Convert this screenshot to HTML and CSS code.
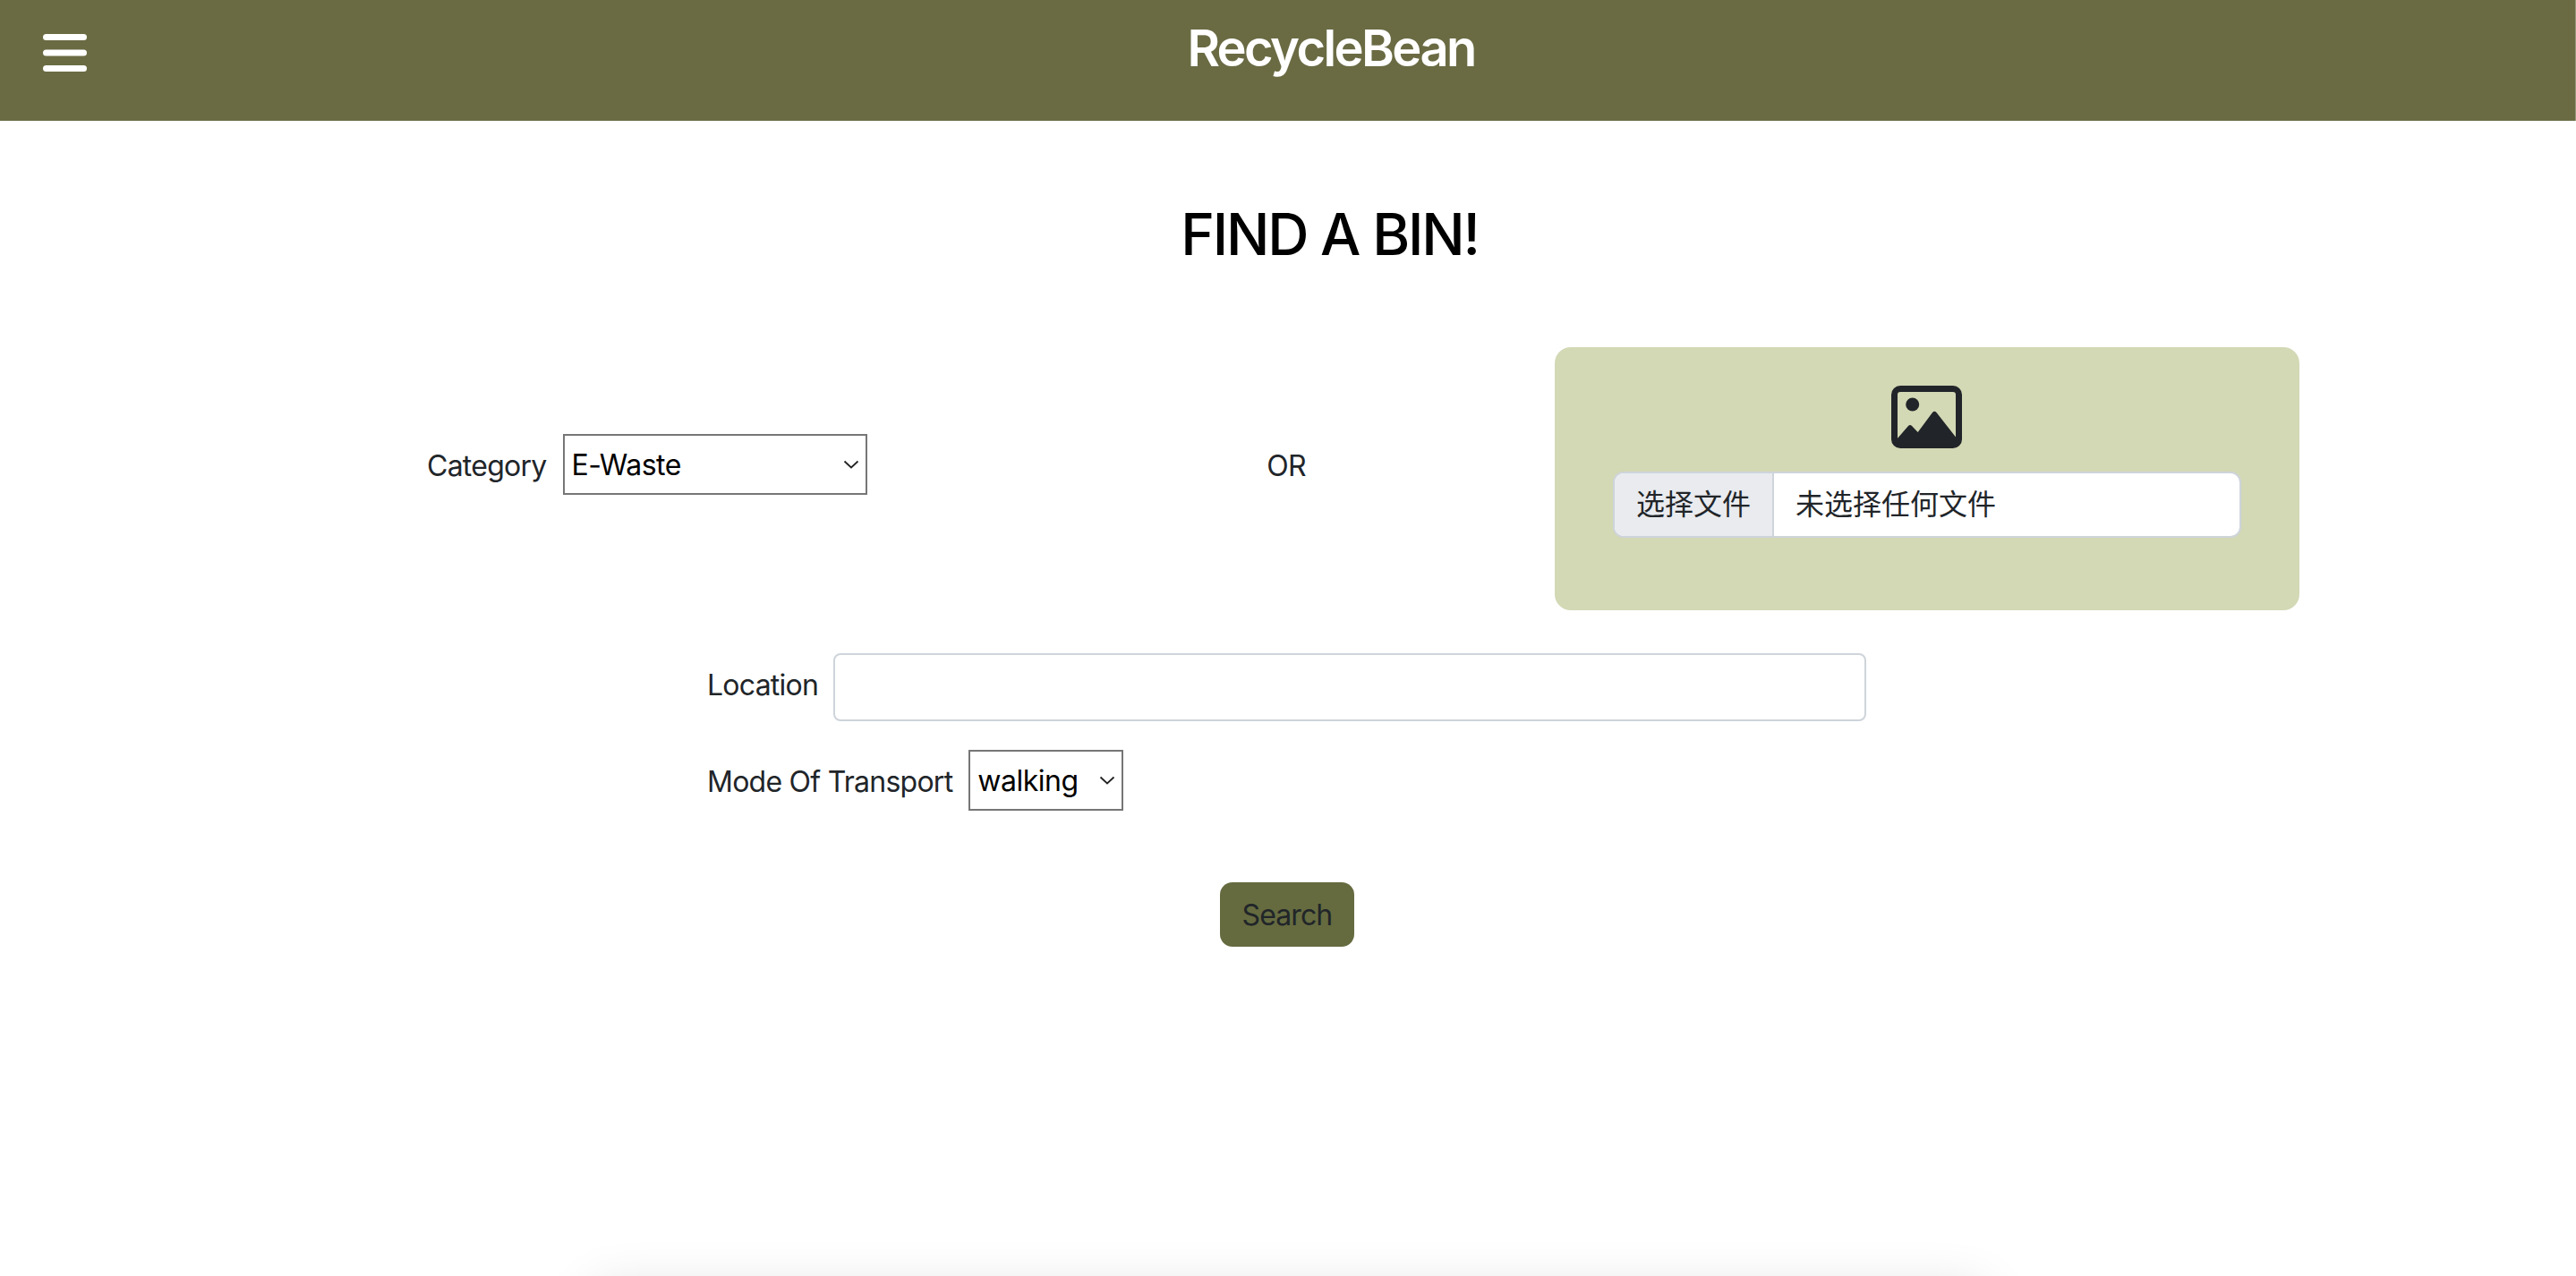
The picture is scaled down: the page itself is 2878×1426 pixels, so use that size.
FILE: index.html
```html
<!DOCTYPE html>
<html lang="en">
<head>
    <meta charset="UTF-8">
    <meta name="viewport" content="width=device-width, initial-scale=1.0">
    <title>RecycleBean</title>
    <link rel="stylesheet" href="styles.css">
</head>
<body>
    <header class="topbar">
        <svg class="menu-icon" width="49" height="42" viewBox="0 0 49 42" aria-hidden="true">
            <rect x="0" y="0" width="49" height="7" rx="3.5"/>
            <rect x="0" y="17.5" width="49" height="7" rx="3.5"/>
            <rect x="0" y="35" width="49" height="7" rx="3.5"/>
        </svg>
        <div class="brand">RecycleBean</div>
    </header>

    <main>
        <h1 class="page-title">FIND A BIN!</h1>

        <form class="find-form">
            <div class="find-row">
                <div class="category-col">
                    <label for="category">Category</label>
                    <select id="category" class="plain-select category-select">
                        <option>E-Waste</option>
                    </select>
                </div>
                <div class="or-col">OR</div>
                <div class="upload-panel">
                    <svg class="image-icon" width="80" height="70" viewBox="0 0 80 70" aria-hidden="true">
                        <path fill-rule="evenodd" d="M10 0H69A10 10 0 0 1 79 10V60A10 10 0 0 1 69 70H10A10 10 0 0 1 0 60V10A10 10 0 0 1 10 0ZM10 7A3 3 0 0 0 7 10V60A3 3 0 0 0 10 63H69A3 3 0 0 0 72 60V10A3 3 0 0 0 69 7Z"/>
                        <circle cx="23.7" cy="21" r="7.5"/>
                        <path d="M6 64V60L19 45Q21 43 23 45L29.700 52L46 30Q48.300 27.500 50.500 30L74 60V64Z"/>
                    </svg>
                    <div class="file-input">
                        <span class="file-btn">选择文件</span>
                        <span class="file-name">未选择任何文件</span>
                    </div>
                </div>
            </div>

            <div class="field-row location-row">
                <label for="location">Location</label>
                <input type="text" id="location" class="location-input">
            </div>

            <div class="field-row transport-row">
                <label for="transport">Mode Of Transport</label>
                <select id="transport" class="plain-select transport-select">
                    <option>walking</option>
                </select>
            </div>

            <div class="submit-row">
                <button type="button" class="search-btn">Search</button>
            </div>
        </form>
    </main>

    <div class="shadow-clip">
        <div class="page-shadow"></div>
    </div>
</body>
</html>
```

FILE: styles.css
```css
* {
    box-sizing: border-box;
}
html, body {
    margin: 0;
    height: 100%;
    overflow: hidden;
}
body {
    position: relative;
    background-color: #fff;
    color: #212529;
    font-family: Inter, "Noto Sans CJK SC", sans-serif;
    font-size: 32px;
    line-height: 1.5;
    letter-spacing: -0.75px;
}

/* top bar */
.topbar {
    display: flex;
    align-items: flex-start;
    height: 135px;
    padding-left: 48px;
    background-color: #6a6b43;
    border-right: 1px solid #97987a;
}
.menu-icon {
    flex: none;
    margin-top: 38px;
    fill: #fff;
}
.brand {
    flex: 1;
    margin-top: 21px;
    color: #fff;
    font-size: 56px;
    font-weight: 600;
    line-height: 1.2;
    letter-spacing: -2.6px;
    text-align: center;
}

.page-title {
    margin: 0;
    padding: 88px 0 88px 93px;
    color: #000;
    font-size: 64px;
    font-weight: 500;
    line-height: 77px;
    letter-spacing: -2.2px;
    text-align: center;
}

/* form */
.find-row {
    display: flex;
    align-items: flex-start;
    margin-left: 477px;
}
.category-col {
    display: flex;
    align-items: center;
    gap: 18px;
    width: 660px;
    margin-top: 97px;
}
.category-col label,
.transport-row label {
    margin-top: 3px;
}
.or-col {
    width: 600px;
    margin-top: 109px;
    text-align: center;
}
.plain-select {
    height: 68px;
    padding: 0 8px;
    border: 2px solid #767676;
    border-radius: 0;
    background-color: #fff;
    background-image: url("data:image/svg+xml,%3Csvg xmlns='http://www.w3.org/2000/svg' width='18' height='10' viewBox='0 0 18 10'%3E%3Cpath d='M1.500 1.500L9 8.500L16.500 1.500' fill='none' stroke='%23222' stroke-width='1.800'/%3E%3C/svg%3E");
    background-repeat: no-repeat;
    background-position: right 7px center;
    color: #000;
    font-family: inherit;
    font-size: 32px;
    letter-spacing: -0.5px;
    appearance: none;
}
.category-select {
    width: 340px;
}
.transport-select {
    width: 173px;
}

.upload-panel {
    display: flex;
    flex-direction: column;
    align-items: center;
    width: 832px;
    height: 294px;
    padding: 43px 65px 0;
    border-radius: 18px;
    background-color: #d3d8b5;
}
.image-icon {
    flex: none;
    margin-bottom: 26px;
    fill: #212529;
}
.file-input {
    display: flex;
    width: 702px;
    height: 74px;
    border: 2px solid #ced4da;
    border-radius: 12px;
    background-color: #fff;
    overflow: hidden;
    line-height: 70px;
    letter-spacing: 0;
}
.file-btn {
    padding: 0 24px;
    border-right: 2px solid #ced4da;
    background-color: #e9ebef;
}
.file-name {
    padding-left: 24px;
}

.field-row {
    display: flex;
    align-items: center;
    gap: 18px;
    margin-left: 790px;
}
.location-row {
    gap: 17px;
    margin-top: 48px;
}
.location-row label {
    margin-bottom: 5px;
}
.location-input {
    width: 1154px;
    height: 76px;
    border: 2px solid #ced4da;
    border-radius: 8px;
    background-color: #fff;
}
.transport-row {
    margin-top: 32px;
}

.submit-row {
    display: flex;
    justify-content: center;
    margin-top: 80px;
    padding-left: 1px;
    padding-right: 3px;
}
.search-btn {
    width: 150px;
    height: 72px;
    padding: 0;
    border: none;
    border-radius: 14px;
    background-color: #656b3f;
    color: #212529;
    font-family: inherit;
    font-size: 32px;
    letter-spacing: -0.9px;
}

.shadow-clip {
    position: absolute;
    left: 0;
    right: 0;
    bottom: 0;
    height: 60px;
    overflow: hidden;
}
.page-shadow {
    position: absolute;
    left: 660px;
    top: 72px;
    width: 1560px;
    height: 200px;
    border-radius: 16px;
    box-shadow: 0 0 56px rgba(0, 0, 0, 0.12);
}
```
